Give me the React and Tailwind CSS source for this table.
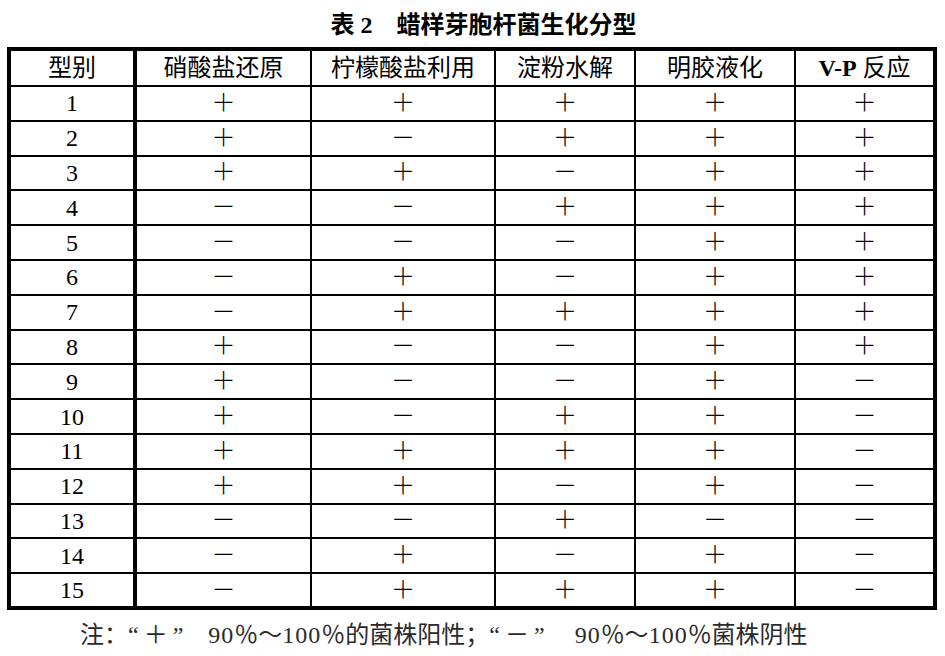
import React from 'react';

const headers = ['型别', '硝酸盐还原', '柠檬酸盐利用', '淀粉水解', '明胶液化'];

const rows = [
  '+++++',
  '+-+++',
  '++-++',
  '--+++',
  '---++',
  '-+-++',
  '-++++',
  '+--++',
  '+--+-',
  '+-++-',
  '++++-',
  '++-+-',
  '--+--',
  '-+-+-',
  '-+++-',
];

const serif = "font-['Liberation_Serif','Noto_Sans_CJK_SC',serif]";

// thin fullwidth plus / minus like the Song typeface in the source
const Sign = ({ value }) => (
  <span className="font-['Noto_Sans_CJK_SC',sans-serif] font-light text-[24px] leading-none">
    {value === '+' ? '＋' : '－'}
  </span>
);

const Num = ({ children }) => <span className="tracking-[1px]">{children}</span>;

const App = () => {
  return (
    <div className={`w-[945px] h-[656px] bg-white text-black ${serif}`}>
      {/* Title */}
      <div className="h-[47px] flex items-center justify-center pl-[22px] pt-[2px]">
        <h1 className="text-[24px] font-bold leading-none">
          表 2<span className="inline-block w-[24px]"></span>蜡样芽胞杆菌生化分型
        </h1>
      </div>

      {/* Table */}
      <table className="ml-[7px] table-fixed border-collapse border-[4px] border-black">
        <colgroup>
          <col className="w-[126px]" />
          <col className="w-[176px]" />
          <col className="w-[184px]" />
          <col className="w-[140px]" />
          <col className="w-[160px]" />
          <col className="w-[140px]" />
        </colgroup>
        <thead>
          <tr className="h-[37px]">
            {headers.map((h, i) => (
              <th
                key={h}
                className={`border-2 border-black text-[24px] font-normal leading-none text-center p-0 ${i === 0 ? 'border-r-[4px]' : ''}`}
              >
                {h}
              </th>
            ))}
            <th className="border-2 border-black text-[24px] font-normal leading-none text-center p-0">
              <span className="font-bold">V-P</span> 反应
            </th>
          </tr>
        </thead>
        <tbody>
          {rows.map((r, idx) => (
            <tr key={idx} className="h-[34.8px]">
              <td className="border-2 border-r-[4px] border-black text-center text-[24px] leading-none p-0">
                {idx + 1}
              </td>
              {r.split('').map((v, j) => (
                <td key={j} className="border-2 border-black text-center p-0">
                  <Sign value={v} />
                </td>
              ))}
            </tr>
          ))}
        </tbody>
      </table>

      {/* Note */}
      <p className="pl-[80px] pt-[13px] text-[24px] leading-none text-[#2a2a2a] whitespace-nowrap">
        注：“<span className="mx-[5px]">＋</span>”
        <span className="ml-[25px]"><Num>90</Num>％～<Num>100</Num>％的菌株阳性；</span>
        “<span className="mx-[5px]">－</span>”
        <span className="ml-[30px]"><Num>90</Num>％～<Num>100</Num>％菌株阴性</span>
      </p>
    </div>
  );
};

export default App;
